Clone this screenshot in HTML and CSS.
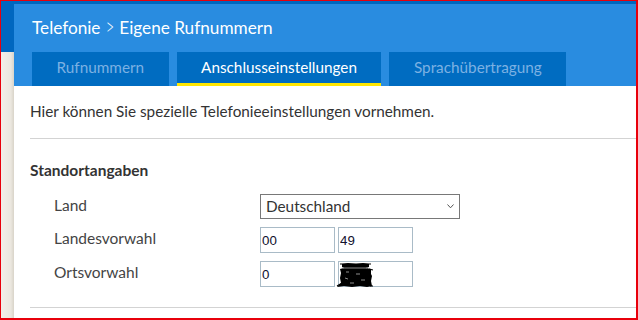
FILE: index.html
```html
<!DOCTYPE html>
<html lang="de">
<head>
    <meta charset="UTF-8">
    <meta name="viewport" content="width=device-width, initial-scale=1.0">
    <title>Eigene Rufnummern</title>
    <link rel="stylesheet" href="styles.css">
</head>
<body>
    <div class="frame">
        <div class="sidebar"></div>
        <div class="main">
            <div class="header">
                <h1 class="title">Telefonie <span class="sep">&gt;</span> Eigene Rufnummern</h1>
                <nav class="tabs">
                    <a class="tab" href="#">Rufnummern</a>
                    <a class="tab active" href="#">Anschlusseinstellungen</a>
                    <a class="tab" href="#">Sprachübertragung</a>
                </nav>
            </div>
            <div class="content">
                <p class="intro">Hier können Sie spezielle Telefonieeinstellungen vornehmen.</p>
                <hr class="divider">
                <h2 class="section-title">Standortangaben</h2>
                <div class="form-grid">
                    <label class="form-label" for="land">Land</label>
                    <div class="select-wrap">
                        <select id="land" class="select">
                            <option>Deutschland</option>
                        </select>
                        <svg class="chevron" viewBox="0 0 7 5">
                            <polyline points="0.5,0.5 3.5,3.8 6.5,0.5"/>
                        </svg>
                    </div>
                    <label class="form-label" for="lkz">Landesvorwahl</label>
                    <div class="field-pair">
                        <input id="lkz" class="field" type="text" value="00">
                        <input class="field" type="text" value="49">
                    </div>
                    <label class="form-label" for="okz">Ortsvorwahl</label>
                    <div class="field-pair">
                        <input id="okz" class="field" type="text" value="0">
                        <input class="field" type="text" value="">
                        <!-- geschwärzte Ortsvorwahl -->
                        <svg class="scribble" viewBox="0 0 38 26">
                            <path class="ink" d="M6 2 L12 1 L20 2 L27 1 L33 2 L33 5 L30 6 L35 7 L35 12 L36 14 L35 19 L36 24 L31 25 L24 24 L16 25 L8 24 L1 25 L3 23 L5 21 L4 16 L5 11 L4 7 L8 6 L6 5 Z"/>
                            <path class="gap" d="M7 6 L31 6 M10 10 L13 10 M20 12 L24 12 M9 16 L12 17 M25 18 L29 18 M14 21 L18 21"/>
                            <path class="edge" d="M4 2 L35 2 M1 24 L6 21 M33 7 L37 8 M34 24 L37 24"/>
                        </svg>
                    </div>
                </div>
                <hr class="divider bottom">
            </div>
        </div>
    </div>
</body>
</html>
```
FILE: styles.css
```css
body {
    margin: 0;
    overflow: hidden;
    font-family: 'Lato', sans-serif;
}

.frame {
    box-sizing: border-box;
    width: 638px;
    height: 320px;
    display: flex;
    background-color: #0067bf;
    border-style: solid;
    border-color: #e8000b;
    border-width: 1px 2px 2px 1px;
}

.sidebar {
    width: 13px;
    margin-top: 51px;
    background: linear-gradient(to right, #f2efe9, #ebe7df 75%, #d9d4c9);
}

.main {
    flex: 1;
    margin-top: 3px;
    display: flex;
    flex-direction: column;
}

.header {
    background-color: #298ce0;
    padding-left: 18px;
}

.title {
    margin: 0;
    padding: 12px 0 12px;
    font-size: 17.2px;
    font-weight: normal;
    line-height: 24px;
    color: white;
}

.sep {
    display: inline-block;
    font-weight: 300;
    transform: scale(0.85, 1.35) translateY(-1px);
}

.tabs {
    display: flex;
    gap: 8px;
}

.tab {
    padding: 0 24.5px 4px;
    line-height: 30px;
    font-size: 15.3px;
    color: #7cb1e3;
    text-decoration: none;
    background-color: #006cc1;
}

.tab.active {
    color: white;
    box-shadow: inset 0 -3px 0 #ffe600;
}

.content {
    flex: 1;
    background-color: white;
    padding: 15px 0 0 16px;
    color: #333;
}

.intro {
    margin: 0;
    font-size: 15.3px;
    line-height: 20px;
}

.divider {
    margin: 17px 0 0;
    border: none;
    border-top: 1px solid #d3d3d3;
}

.divider.bottom {
    margin-top: 20px;
}

.section-title {
    margin: 21px 0 0;
    font-size: 15.5px;
    font-weight: bold;
    line-height: 20px;
}

.form-grid {
    display: grid;
    grid-template-columns: 206px auto;
    row-gap: 8px;
    margin-top: 14px;
    padding-left: 24px;
}

.form-label {
    font-size: 15.5px;
    line-height: 22px;
    color: #444;
}

.select-wrap {
    position: relative;
    width: 200px;
}

.select {
    box-sizing: border-box;
    width: 200px;
    height: 25px;
    padding: 0 5px 2px;
    border: 1px solid #787878;
    border-radius: 0;
    background: white;
    appearance: none;
    font-family: 'Lato', sans-serif;
    font-size: 15.3px;
    color: #333;
}

.chevron {
    position: absolute;
    left: 187px;
    top: 10px;
    width: 7px;
    height: 5px;
    fill: none;
    stroke: #555;
    stroke-width: 1;
}

.field-pair {
    position: relative;
    display: flex;
    gap: 3px;
}

.field {
    box-sizing: border-box;
    width: 75px;
    height: 26px;
    margin: 0;
    padding: 0 1px;
    border: 1px solid #a9bbc7;
    font-family: 'Liberation Sans', Arial, sans-serif;
    font-size: 13.3px;
    color: #10102e;
}

.scribble {
    position: absolute;
    left: 76px;
    top: 1px;
    width: 38px;
    height: 26px;
}

.scribble .ink {
    fill: #000;
}

.scribble .gap {
    fill: none;
    stroke: #fff;
    stroke-width: 0.8;
    opacity: 0.7;
}

.scribble .edge {
    fill: none;
    stroke: #000;
    stroke-width: 1.2;
}
```
